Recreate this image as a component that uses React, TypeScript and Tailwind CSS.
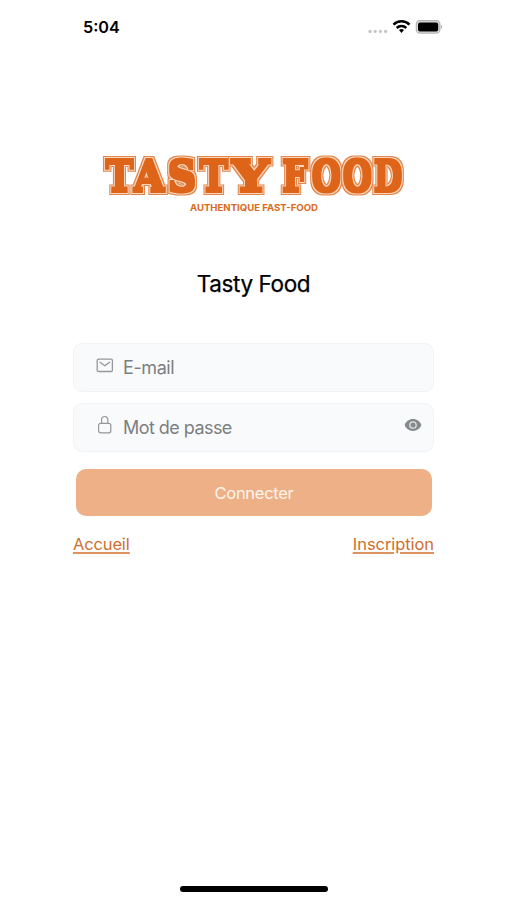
const letters = [
  { ch: "T", x: 103.3, w: 32.4, adv: 0.745, left: 0.02, ink: 0.705 },
  { ch: "A", x: 130.5, w: 37, adv: 0.776, left: -0.005, ink: 0.785 },
  { ch: "S", x: 167, w: 30.5, adv: 0.685, left: 0.06, ink: 0.58 },
  { ch: "T", x: 197.3, w: 33, adv: 0.745, left: 0.02, ink: 0.705 },
  { ch: "Y", x: 228, w: 45.5, adv: 0.714, left: -0.01, ink: 0.735 },
  { ch: "F", x: 281, w: 29, adv: 0.71, left: 0.055, ink: 0.63 },
  { ch: "O", x: 310.5, w: 31.5, adv: 0.871, left: 0.055, ink: 0.76 },
  { ch: "O", x: 341.5, w: 31.5, adv: 0.871, left: 0.055, ink: 0.76 },
  { ch: "D", x: 372.5, w: 31, adv: 0.867, left: 0.055, ink: 0.76 },
];

function Wordmark() {
  const size = 42.5;
  return (
    <svg
      className="block h-[80px] w-[330px]"
      viewBox="89 140 330 80"
      fontFamily="'DejaVu Serif', serif"
      fontWeight="700"
      fontSize={size}
    >
      <defs>
        {/* Varsity lettering: solid face, light inline, thin outer contour */}
        <filter id="varsity" x="-20%" y="-20%" width="140%" height="140%" colorInterpolationFilters="sRGB">
          <feMorphology in="SourceAlpha" operator="dilate" radius="3 4" result="outer" />
          <feFlood floodColor="#e2864c" />
          <feComposite in2="outer" operator="in" result="contour" />
          <feMorphology in="SourceAlpha" operator="dilate" radius="2 3" result="middle" />
          <feFlood floodColor="#f9d6bd" />
          <feComposite in2="middle" operator="in" result="inline" />
          <feMorphology in="SourceAlpha" operator="dilate" radius="1 2" result="inner" />
          <feFlood floodColor="#dd6418" />
          <feComposite in2="inner" operator="in" result="face" />
          <feMerge>
            <feMergeNode in="contour" />
            <feMergeNode in="inline" />
            <feMergeNode in="face" />
          </feMerge>
        </filter>
      </defs>
      {letters.map((l, i) => {
        const scale = (l.w - 6) / (l.ink * size);
        return (
          <text
            key={i}
            x={l.x + 3 - l.left * size * scale}
            y="190.5"
            textLength={l.adv * size * scale}
            lengthAdjust="spacingAndGlyphs"
            fill="#dd6418"
            filter="url(#varsity)"
          >
            {l.ch}
          </text>
        );
      })}
      <text
        x="190"
        y="211.2"
        fontFamily="Inter, sans-serif"
        fontSize="9.2"
        fontWeight="700"
        fill="#d96a20"
        textLength="128"
        lengthAdjust="spacingAndGlyphs"
      >
        AUTHENTIQUE FAST-FOOD
      </text>
    </svg>
  );
}

function StatusBar() {
  return (
    <header className="flex h-[54px] items-center justify-between pr-[64px] pl-[83px]">
      <span className="text-[16.2px] leading-none font-semibold">5:04</span>
      <svg className="h-[20px] w-[78px]" viewBox="0 0 78 20">
        <g fill="#c4c4c4">
          <circle cx="5" cy="14.4" r="1.6" />
          <circle cx="10.2" cy="14.4" r="1.6" />
          <circle cx="15.4" cy="14.4" r="1.6" />
          <circle cx="20.6" cy="14.4" r="1.6" />
        </g>
        <g fill="none" stroke="#000" strokeWidth="2.5">
          <path d="M28.500 7.600a11.2 11.2 0 0 1 16 0" />
          <path d="M31.700 11a6.8 6.8 0 0 1 9.6 0" />
        </g>
        <path d="M34 13.1a3.6 3.6 0 0 1 5 0L36.500 15.9z" fill="#000" />
        <rect x="51.300" y="3.7" width="23.6" height="12.4" rx="3.6" fill="#ddd" stroke="#b5b5b5" strokeWidth="1.2" />
        <rect x="53" y="5.4" width="20.2" height="9" rx="2" fill="#000" />
        <path d="M75.900 8c1.6.6 1.6 3.2 0 3.8z" fill="#aaa" />
      </svg>
    </header>
  );
}

function MailIcon() {
  return (
    <svg className="mb-[5px] h-[15px] w-[18px]" viewBox="0 0 18 15" fill="none" stroke="#949899" strokeWidth="1.3">
      <rect x="1.2" y="1.2" width="15.2" height="12.3" rx="1.3" />
      <path d="m4 4.2 4.8 3.6 4.8-3.6" strokeLinecap="round" strokeLinejoin="round" />
    </svg>
  );
}

function LockIcon() {
  return (
    <svg className="mb-[5px] h-[20px] w-[18px]" viewBox="0 0 18 20" fill="none" stroke="#949899" strokeWidth="1.2">
      <rect x="2.6" y="8.3" width="12.2" height="9.5" rx="2" />
      <path d="M5.6 8.3V4.6a3.1 3.1 0 0 1 6.2 0v3.7" />
    </svg>
  );
}

function EyeIcon() {
  return (
    <svg className="mb-[5px] ml-auto h-[14px] w-[18px]" viewBox="0 0 18 14">
      <path d="M.6 7C2 3.4 5.2 1.1 9 1.1S16 3.4 17.4 7C16 10.6 12.8 12.9 9 12.9S2 10.6.6 7z" fill="#858a8c" />
      <circle cx="9" cy="7" r="3.2" fill="#858a8c" stroke="#dfe2e3" strokeWidth="1.3" />
    </svg>
  );
}

const field =
  "flex h-[49px] items-center rounded-[9px] border border-[#f2f3f4] bg-[#f9fafc] pr-[11px] pl-[22px] text-[18px] text-[#7c7f80]";

export default function App() {
  return (
    <div className="flex h-[900px] w-[507px] flex-col overflow-hidden bg-white font-[Inter,sans-serif] text-black">
      <StatusBar />
      <div className="mt-[86px] ml-[89px]">
        <Wordmark />
      </div>
      <h1 className="mt-[47px] text-center text-[22.5px] leading-[34px] font-normal tracking-[-0.4px] [-webkit-text-stroke:0.25px_#000]">
        Tasty Food
      </h1>
      <form className="mt-[42px] mr-[73px] ml-[73px] flex flex-col">
        <label className={field}>
          <MailIcon />
          <span className="ml-[9px] tracking-[-0.4px]">E-mail</span>
        </label>
        <label className={field + " mt-[11px]"}>
          <LockIcon />
          <span className="ml-[9px] tracking-[-0.55px]">Mot de passe</span>
          <EyeIcon />
        </label>
        <button
          type="button"
          className="mr-[2px] ml-[3px] mt-[17px] h-[47px] rounded-[10px] bg-[#edb087] pt-[2px] text-[16.5px] tracking-[-0.3px] text-[#fff5ed]"
        >
          Connecter
        </button>
        <nav className="mt-[16px] flex justify-between text-[16.5px] leading-6 text-[#cf6f30] underline decoration-[#dc935f] decoration-[1.5px] underline-offset-2">
          <a className="tracking-[-0.15px]">Accueil</a>
          <a className="tracking-[-0.07px]">Inscription</a>
        </nav>
      </form>
      <div className="mt-auto mb-[8px] ml-[180px] h-[6px] w-[148px] rounded-full bg-black" />
    </div>
  );
}
